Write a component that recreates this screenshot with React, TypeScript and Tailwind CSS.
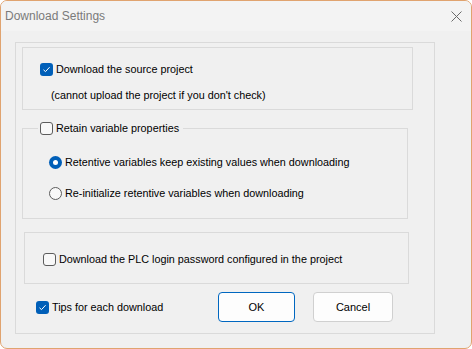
import React from "react";

function CheckBox({ checked }: { checked: boolean }) {
  if (checked) {
    return (
      <span className="w-[13px] h-[13px] rounded-[3px] bg-[#005fb8] flex items-center justify-center shrink-0">
        <svg width="9" height="9" viewBox="0 0 9 9">
          <path d="M1.5 4.8 L3.5 6.6 L7.6 2.2" fill="none" stroke="#ffffff" strokeWidth="1" />
        </svg>
      </span>
    );
  }
  return <span className="w-[13px] h-[13px] rounded-[3px] border border-[#5c5c5c] bg-[#f8f8f8] shrink-0" />;
}

function Radio({ checked }: { checked: boolean }) {
  if (checked) {
    return (
      <span className="w-[13px] h-[13px] rounded-full bg-[#005fb8] flex items-center justify-center shrink-0">
        <span className="w-[5px] h-[5px] rounded-full bg-white" />
      </span>
    );
  }
  return <span className="w-[13px] h-[13px] rounded-full border border-[#5c5c5c] bg-[#f8f8f8] shrink-0" />;
}

export default function App() {
  return (
    <div
      className="w-[472px] h-[349px] bg-[#f0f0f0] border border-[#e0a36f] rounded-[7px] overflow-hidden text-[10.8px] text-black leading-none"
      style={{ fontFamily: '"Liberation Sans", Arial, sans-serif' }}
    >
      {/* Title bar */}
      <div className="h-[30px] bg-[#f3f3f3] flex items-center justify-between pl-[4px] pr-[9px]">
        <span className="text-[12px] text-[#7a7a7a]">Download Settings</span>
        <svg width="11" height="11" viewBox="0 0 11 11">
          <path d="M0.5 0.5 L10.5 10.5 M10.5 0.5 L0.5 10.5" stroke="#6b6b6b" strokeWidth="1" />
        </svg>
      </div>

      {/* Outer panel */}
      <div className="ml-[14px] mt-[11px] w-[420px] h-[292px] border border-[#dadada] flex flex-col">
        {/* Source project */}
        <div className="ml-[6px] mt-[4px] w-[391px] h-[63px] border border-[#dadada] flex flex-col">
          <div className="flex items-center gap-[3px] ml-[17px] mt-[15px]">
            <CheckBox checked />
            <span>Download the source project</span>
          </div>
          <div className="ml-[28px] mt-[14px]">(cannot upload the project if you don't check)</div>
        </div>

        {/* Retain variable properties */}
        <div className="relative ml-[6px] mt-[18px] w-[386px] h-[91px] border border-[#dadada] flex flex-col">
          <div className="absolute left-[15px] top-[-7px] pl-[2px] pr-[4px] bg-[#f0f0f0] flex items-center gap-[3px]">
            <CheckBox checked={false} />
            <span>Retain variable properties</span>
          </div>
          <div className="flex items-center gap-[3px] ml-[26px] mt-[27px]">
            <Radio checked />
            <span>Retentive variables keep existing values when downloading</span>
          </div>
          <div className="flex items-center gap-[3px] ml-[26px] mt-[18px]">
            <Radio checked={false} />
            <span>Re-initialize retentive variables when downloading</span>
          </div>
        </div>

        {/* PLC password */}
        <div className="ml-[8px] mt-[13px] w-[385px] h-[52px] border border-[#dadada] flex items-center">
          <div className="flex items-center gap-[3px] ml-[18px] mt-[2px]">
            <CheckBox checked={false} />
            <span>Download the PLC login password configured in the project</span>
          </div>
        </div>

        {/* Bottom row */}
        <div className="flex items-center mt-[8px] h-[30px]">
          <div className="flex items-center gap-[3px] ml-[20px] w-[182px]">
            <CheckBox checked />
            <span>Tips for each download</span>
          </div>
          <button className="w-[77px] h-[30px] bg-[#fdfdfd] border border-[#0067c0] rounded-[4px] text-[11px]">
            OK
          </button>
          <button className="ml-[18px] w-[80px] h-[30px] bg-[#fdfdfd] border border-[#d0d0d0] rounded-[4px] text-[11px]">
            Cancel
          </button>
        </div>
      </div>
    </div>
  );
}
